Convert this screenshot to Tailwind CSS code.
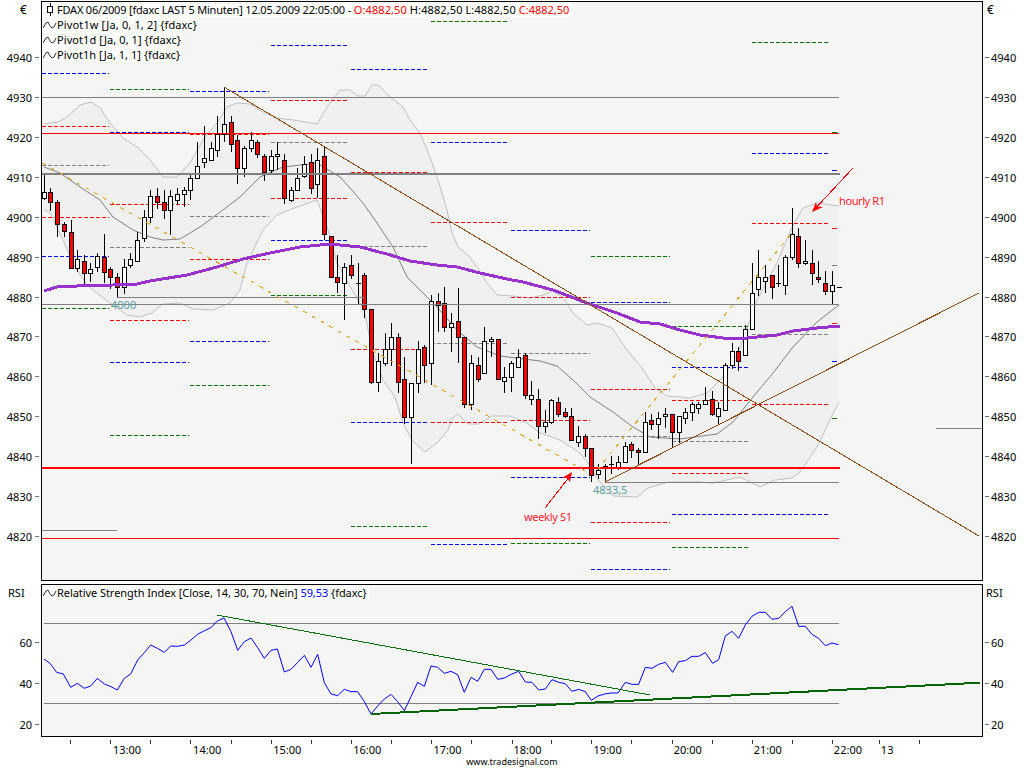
<!DOCTYPE html>
<html>
<head>
<meta charset="utf-8">
<script src="https://cdn.jsdelivr.net/npm/@tailwindcss/browser@4"></script>
</head>
<body class="bg-white">
<div class="w-[1024px] h-[768px] bg-white flex flex-col text-[11px] leading-[15px] text-black overflow-hidden [font-family:'Noto_Sans',sans-serif]">

  <!-- price row -->
  <div class="mt-px h-[580px] shrink-0 flex">
    <div class="w-[41px] flex flex-col">
      <div class="h-[36.75px] shrink-0 pl-[20px] pt-[1px] text-[12px]">€</div>
      <div class="h-[39.9px] shrink-0 flex items-center justify-end pr-[2px] gap-[3px]"><span>4940</span><i class="block w-[4px] h-px bg-gray-500"></i></div>
      <div class="h-[39.9px] shrink-0 flex items-center justify-end pr-[2px] gap-[3px]"><span>4930</span><i class="block w-[4px] h-px bg-gray-500"></i></div>
      <div class="h-[39.9px] shrink-0 flex items-center justify-end pr-[2px] gap-[3px]"><span>4920</span><i class="block w-[4px] h-px bg-gray-500"></i></div>
      <div class="h-[39.9px] shrink-0 flex items-center justify-end pr-[2px] gap-[3px]"><span>4910</span><i class="block w-[4px] h-px bg-gray-500"></i></div>
      <div class="h-[39.9px] shrink-0 flex items-center justify-end pr-[2px] gap-[3px]"><span>4900</span><i class="block w-[4px] h-px bg-gray-500"></i></div>
      <div class="h-[39.9px] shrink-0 flex items-center justify-end pr-[2px] gap-[3px]"><span>4890</span><i class="block w-[4px] h-px bg-gray-500"></i></div>
      <div class="h-[39.9px] shrink-0 flex items-center justify-end pr-[2px] gap-[3px]"><span>4880</span><i class="block w-[4px] h-px bg-gray-500"></i></div>
      <div class="h-[39.9px] shrink-0 flex items-center justify-end pr-[2px] gap-[3px]"><span>4870</span><i class="block w-[4px] h-px bg-gray-500"></i></div>
      <div class="h-[39.9px] shrink-0 flex items-center justify-end pr-[2px] gap-[3px]"><span>4860</span><i class="block w-[4px] h-px bg-gray-500"></i></div>
      <div class="h-[39.9px] shrink-0 flex items-center justify-end pr-[2px] gap-[3px]"><span>4850</span><i class="block w-[4px] h-px bg-gray-500"></i></div>
      <div class="h-[39.9px] shrink-0 flex items-center justify-end pr-[2px] gap-[3px]"><span>4840</span><i class="block w-[4px] h-px bg-gray-500"></i></div>
      <div class="h-[39.9px] shrink-0 flex items-center justify-end pr-[2px] gap-[3px]"><span>4830</span><i class="block w-[4px] h-px bg-gray-500"></i></div>
      <div class="h-[39.9px] shrink-0 flex items-center justify-end pr-[2px] gap-[3px]"><span>4820</span><i class="block w-[4px] h-px bg-gray-500"></i></div>
    </div>

    <div class="relative w-[942px] h-[580px] border border-black bg-[#f5f5f5]">
      <svg class="block" width="940" height="578" viewBox="42 2 940 578" fill="none">
        <!-- bollinger band fill + outlines -->
        <path fill="#f0f0f0" stroke="none" d="M44 209L50 213L63 240L75 267L87 285L93 290L110 303L127 315L140 317L152 313L163 304L180 303L193 309L213 310L230 303L240 290L247 263L263 230L277 215L297 207L317 200L328 230L337 263L348 283L364 310L373 353L383 380L395 397L403 423L412 440L425 452L438 442L448 430L452 418L458 414L468 424L478 424L492 416L510 416L527 423L540 433L560 440L580 453L588 463L598 480L613 496L637 497L648 488L668 482L697 482L713 483L740 477L760 487L775 480L792 478L800 472L817 447L830 420L839 402L839 206L817 203L803 208L792 227L777 263L757 300L738 353L723 377L707 393L690 398L680 397L667 396L655 388L642 368L627 350L612 328L598 323L587 325L573 313L563 297L553 291L543 295L530 298L513 296L497 295L487 283L477 267L468 255L458 247L452 233L447 210L438 180L430 157L420 133L410 120L403 107L390 97L378 85L372 85L365 96L358 96L350 90L340 90L327 107L317 124L293 120L277 118L263 112L250 104L237 103L227 107L217 123L203 140L190 163L177 177L163 177L150 160L137 147L123 138L110 123L100 108L91 102L80 105L67 117L58 122L44 124Z"/>
        <path stroke="#c0c0c0" d="M44 124L58 122L67 117L80 105L91 102L100 108L110 123L123 138L137 147L150 160L163 177L177 177L190 163L203 140L217 123L227 107L237 103L250 104L263 112L277 118L293 120L317 124L327 107L340 90L350 90L358 96L365 96L372 85L378 85L390 97L403 107L410 120L420 133L430 157L438 180L447 210L452 233L458 247L468 255L477 267L487 283L497 295L513 296L530 298L543 295L553 291L563 297L573 313L587 325L598 323L612 328L627 350L642 368L655 388L667 396L680 397L690 398L707 393L723 377L738 353L757 300L777 263L792 227L803 208L817 203L839 206"/>
        <path stroke="#c0c0c0" d="M44 209L50 213L63 240L75 267L87 285L93 290L110 303L127 315L140 317L152 313L163 304L180 303L193 309L213 310L230 303L240 290L247 263L263 230L277 215L297 207L317 200L328 230L337 263L348 283L364 310L373 353L383 380L395 397L403 423L412 440L425 452L438 442L448 430L452 418L458 414L468 424L478 424L492 416L510 416L527 423L540 433L560 440L580 453L588 463L598 480L613 496L637 497L648 488L668 482L697 482L713 483L740 477L760 487L775 480L792 478L800 472L817 447L830 420L839 402"/>
        <path stroke="#808080" d="M44 167L60 173L80 187L100 200L113 217L133 230L150 237L163 240L180 239L200 227L223 210L240 197L260 177L283 167L317 163L340 177L350 188L363 203L377 223L393 247L407 277L420 290L437 307L457 330L477 347L500 356L540 361L557 366L573 380L590 397L613 412L633 427L650 437L680 439L717 434L733 422L753 397L773 373L793 347L817 322L839 305"/>

        <!-- pivot segments -->
        <g shape-rendering="crispEdges" stroke-dasharray="4 2">
          <path stroke="#0000ff" d="M42 73.5h67M42 256.5h67M110 132.5h79M110 362.5h79M190 91.5h79M190 341.5h79M271 45.5h78M271 240.5h78M351 69.5h78M351 422.5h78M431 142.5h78M431 544.5h78M511 230.5h79M511 477.5h79M591 302.5h79M591 569.5h79M672 367.5h78M672 514.5h78M752 153.5h78M752 514.5h78"/>
          <path stroke="#ff0000" d="M42 126.5h67M42 217.5h67M110 204.5h79M110 320.5h79M190 134.5h79M190 259.5h79M271 100.5h78M271 198.5h78M351 172.5h78M351 349.5h78M431 222.5h78M431 422.5h78M511 297.5h79M511 420.5h79M591 389.5h79M591 522.5h79M672 400.5h78M672 473.5h78M752 223.5h78M752 404.5h78"/>
          <path stroke="#007000" d="M42 34.5h67M42 308.5h67M110 89.5h79M110 435.5h79M190 3.5h79M190 385.5h79M271 295.5h78M351 526.5h78M431 21.5h78M511 173.5h79M511 543.5h79M591 256.5h79M672 326.5h78M672 547.5h78M752 42.5h78"/>
          <path stroke="#808080" d="M42 165.5h67M110 247.5h79M190 216.5h79M271 142.5h78M351 246.5h78M431 343.5h78M511 353.5h79M591 436.5h79M672 441.5h78M752 334.5h78"/>
        </g>
        <g shape-rendering="crispEdges">
          <path stroke="#0000ff" d="M832 170.5h5M832 361.5h5"/>
          <path stroke="#ff0000" d="M832 228.5h5M832 323.5h5"/>
          <path stroke="#007000" d="M832 132.5h5M832 418.5h5"/>
          <path stroke="#808080" d="M832 265.5h5"/>
        </g>

        <!-- candles -->
        <g shape-rendering="crispEdges" stroke="#000">
          <path d="M44.5 175V200M50.5 188V211M57.5 200V237M64.5 222V237M71.5 220V269M77.5 250V272M84.5 255V285M90.5 263V282M97.5 253V272M104.5 234V283M110.5 267V289M117.5 273V297M124.5 259V294M130.5 253V268M137.5 232V261M144.5 210V242M150.5 190V223M157.5 188V209M164.5 190V219M170.5 190V235M177.5 188V205M184.5 187V207M190.5 173V200M197.5 142V178M204.5 126V168M211.5 142V160M217.5 116V157M224.5 87V142M231.5 116V152M237.5 135V184M244.5 146V177M251.5 132V152M257.5 140V158M264.5 154V181M271.5 150V173M277.5 142V170M284.5 154V204M291.5 187V202M297.5 168V190M304.5 156V178M311.5 154V194M317.5 148V198M324.5 147V240M331.5 236V277M337.5 255V293M344.5 263V320M351.5 255V279M358.5 263V305M364.5 273V318M371.5 309V384M378.5 353V392M385.5 333V366M391.5 323V366M398.5 333V393M404.5 357V424M411.5 383V464M418.5 341V393M424.5 345V383M431.5 295V385M438.5 293V332M444.5 287V332M451.5 313V352M458.5 288V363M464.5 337V408M471.5 355V410M478.5 357V382M484.5 327V373M491.5 337V357M498.5 339V379M504.5 367V393M511.5 361V392M518.5 349V367M525.5 353V399M531.5 381V405M538.5 389V439M545.5 410V433M551.5 399V424M558.5 397V417M565.5 408V418M571.5 408V441M578.5 426V447M585.5 434V457M591.5 448V482M598.5 464V479M605.5 464V482M611.5 456V474M618.5 456V470M625.5 442V462M631.5 442V458M638.5 448V466M645.5 412V452M651.5 414V430M658.5 412V439M665.5 408V428M672.5 414V447M679.5 417V443M685.5 408V424M692.5 402V421M698.5 402V414M705.5 387V404M712.5 391V416M718.5 402V424M725.5 363V410M732.5 343V369M738.5 347V371M745.5 325V355M752.5 263V329M758.5 250V296M765.5 265V293M772.5 275V299M778.5 265V287M785.5 255V295M792.5 208V260M798.5 228V268M805.5 240V265M812.5 250V285M818.5 261V283M825.5 271V295M832.5 271V304M837 287.5h5M603 466.5h5M609 464.5h5M776 283.5h5M356 283.5h5"/>
          <path fill="#ffffff" d="M42.5 192.5h4v6h-4zM75.5 259.5h4v9h-4zM88.5 269.5h4v4h-4zM95.5 256.5h4v11h-4zM122.5 267.5h4v20h-4zM128.5 259.5h4v6h-4zM135.5 240.5h4v21h-4zM142.5 217.5h4v21h-4zM148.5 196.5h4v21h-4zM168.5 196.5h4v14h-4zM175.5 194.5h4v6h-4zM182.5 190.5h4v4h-4zM188.5 178.5h4v12h-4zM195.5 166.5h4v12h-4zM202.5 158.5h4v4h-4zM209.5 148.5h4v12h-4zM215.5 134.5h4v16h-4zM222.5 124.5h4v10h-4zM242.5 148.5h4v20h-4zM249.5 140.5h4v8h-4zM269.5 156.5h4v14h-4zM275.5 154.5h4v2h-4zM289.5 190.5h4v10h-4zM295.5 178.5h4v12h-4zM302.5 164.5h4v12h-4zM315.5 160.5h4v24h-4zM342.5 267.5h4v16h-4zM376.5 361.5h4v21h-4zM383.5 349.5h4v14h-4zM389.5 337.5h4v12h-4zM409.5 383.5h4v34h-4zM416.5 349.5h4v34h-4zM429.5 301.5h4v62h-4zM449.5 323.5h4v4h-4zM469.5 363.5h4v41h-4zM482.5 341.5h4v32h-4zM489.5 339.5h4v2h-4zM502.5 377.5h4v4h-4zM509.5 363.5h4v14h-4zM516.5 357.5h4v10h-4zM529.5 395.5h4v4h-4zM543.5 422.5h4v4h-4zM549.5 400.5h4v22h-4zM576.5 436.5h4v6h-4zM596.5 470.5h4v4h-4zM616.5 462.5h4v5h-4zM623.5 446.5h4v16h-4zM643.5 422.5h4v30h-4zM656.5 418.5h4v6h-4zM663.5 414.5h4v2h-4zM677.5 416.5h4v16h-4zM683.5 412.5h4v6h-4zM690.5 404.5h4v8h-4zM696.5 404.5h4v4h-4zM703.5 400.5h4v4h-4zM716.5 408.5h4v8h-4zM723.5 365.5h4v45h-4zM730.5 351.5h4v14h-4zM743.5 329.5h4v26h-4zM750.5 293.5h4v36h-4zM756.5 277.5h4v12h-4zM763.5 277.5h4v4h-4zM783.5 257.5h4v28h-4zM790.5 234.5h4v23h-4zM803.5 261.5h4v2h-4zM830.5 285.5h4v6h-4z"/>
          <path fill="#ff0000" d="M48.5 192.5h4v10h-4zM55.5 202.5h4v22h-4zM62.5 224.5h4v7h-4zM69.5 232.5h4v36h-4zM82.5 261.5h4v12h-4zM102.5 257.5h4v15h-4zM108.5 269.5h4v8h-4zM115.5 277.5h4v10h-4zM155.5 196.5h4v6h-4zM162.5 202.5h4v8h-4zM229.5 122.5h4v22h-4zM235.5 140.5h4v28h-4zM255.5 142.5h4v12h-4zM262.5 156.5h4v16h-4zM282.5 160.5h4v38h-4zM309.5 162.5h4v26h-4zM322.5 156.5h4v78h-4zM329.5 236.5h4v41h-4zM335.5 277.5h4v5h-4zM349.5 265.5h4v10h-4zM362.5 275.5h4v34h-4zM369.5 309.5h4v73h-4zM396.5 337.5h4v45h-4zM402.5 379.5h4v38h-4zM422.5 347.5h4v18h-4zM436.5 301.5h4v4h-4zM442.5 303.5h4v24h-4zM456.5 321.5h4v16h-4zM462.5 337.5h4v67h-4zM476.5 365.5h4v14h-4zM496.5 339.5h4v40h-4zM523.5 355.5h4v40h-4zM536.5 399.5h4v27h-4zM556.5 402.5h4v12h-4zM563.5 412.5h4v4h-4zM569.5 416.5h4v24h-4zM583.5 436.5h4v12h-4zM589.5 448.5h4v27h-4zM629.5 444.5h4v6h-4zM636.5 450.5h4v2h-4zM649.5 420.5h4v4h-4zM670.5 414.5h4v18h-4zM710.5 399.5h4v15h-4zM736.5 351.5h4v10h-4zM770.5 275.5h4v12h-4zM796.5 236.5h4v27h-4zM810.5 263.5h4v10h-4zM816.5 277.5h4v2h-4zM823.5 283.5h4v8h-4z"/>
        </g>

        <!-- solid levels -->
        <g shape-rendering="crispEdges">
          <path stroke="#808080" d="M42 97.5H839M42 304.5H839M117 297.5H364M605 482.5H839M42 530.5H117M936 428.5H982"/>
          <path stroke="#808080" stroke-width="2" d="M42 174H840"/>
          <path stroke="#ff0000" d="M42 133.5H839M42 538.5H839"/>
          <path stroke="#ff0000" stroke-width="2" d="M42 468H840"/>
        </g>

        <!-- purple average -->
        <path stroke="#9932cc" stroke-width="3" shape-rendering="crispEdges" d="M44 291L57 287L77 286L113 285L137 284L150 281L187 275L217 267L243 259L270 253L300 247L330 244L360 247L387 254L410 261L437 265L457 267L480 273L507 279L523 282L553 290L587 303L617 313L640 322L660 324L680 330L700 335L723 338L747 338L777 335L793 331L817 328L840 326"/>

        <!-- trend lines -->
        <g shape-rendering="crispEdges">
          <path stroke="#8b4a14" d="M224 87L979 536M605 482L979 293"/>
          <path stroke="#e0a020" stroke-dasharray="4 6" d="M42 163L587 472M597 470L792 233"/>
          <path stroke="#ff0000" d="M853 168L814 210M545 508L570 476"/>
        </g>
        <path fill="#ff0000" d="M812 212L823 207L817 206.5L816 202ZM572 472L562 478L567 478L570 482Z"/>

        <!-- chart notes -->
        <g font-size="11">
          <text x="839" y="205" fill="#ff1a30" textLength="46">hourly R1</text>
          <text x="524" y="521" fill="#ff1a30" textLength="48">weekly S1</text>
          <text x="111" y="309" fill="#5f9ea0">4000</text>
          <text x="593" y="494" fill="#5f9ea0">4833,5</text>
        </g>
      </svg>

      <!-- legend -->
      <div class="absolute left-0 top-0 flex flex-col items-start">
        <div class="h-[15px] w-[530px] bg-white/90 flex items-center pl-[1px] whitespace-nowrap">
          <svg class="w-[14px] h-[13px] shrink-0" viewBox="0 0 14 13" fill="none" stroke="#111"><path d="M7.5 0V13"/><rect x="4.5" y="3.5" width="5" height="6" fill="#fff"/></svg>
          <span class="tracking-[-0.2px]">FDAX 06/2009 [fdaxc LAST 5 Minuten]&nbsp;</span><span class="tracking-[-0.16px]">12.05.2009 22:05:00 -&nbsp;</span><span class="text-[#ff0000] tracking-[0.1px]">O:4882,50</span><span class="tracking-[0.1px]">&nbsp;H:4882,50 L:4882,50&nbsp;</span><span class="text-[#ff0000]">C:4882,50</span>
        </div>
        <div class="h-[15px] bg-white/90 flex items-center pl-[1px] pr-[2px] whitespace-nowrap tracking-[0.14px]">
          <svg class="w-[14px] h-[8px] shrink-0" viewBox="0 0 14 8" fill="none" stroke="#333"><path d="M0 7L3 2L5 1L7 5L9 7L11 6L13 2"/></svg>
          <span>Pivot1w [Ja, 0, 1, 2] {fdaxc}</span>
        </div>
        <div class="h-[15px] bg-white/90 flex items-center pl-[1px] pr-[2px] whitespace-nowrap tracking-[0.08px]">
          <svg class="w-[14px] h-[8px] shrink-0" viewBox="0 0 14 8" fill="none" stroke="#333"><path d="M0 7L3 2L5 1L7 5L9 7L11 6L13 2"/></svg>
          <span>Pivot1d [Ja, 0, 1] {fdaxc}</span>
        </div>
        <div class="h-[15px] bg-white/90 flex items-center pl-[1px] pr-[2px] whitespace-nowrap tracking-[0.04px]">
          <svg class="w-[14px] h-[8px] shrink-0" viewBox="0 0 14 8" fill="none" stroke="#333"><path d="M0 7L3 2L5 1L7 5L9 7L11 6L13 2"/></svg>
          <span>Pivot1h [Ja, 1, 1] {fdaxc}</span>
        </div>
      </div>
    </div>

    <div class="w-[41px] flex flex-col">
      <div class="h-[36.75px] shrink-0 pl-[4px] pt-[1px] text-[12px]">€</div>
      <div class="h-[39.9px] shrink-0 flex items-center pl-[2px] gap-[2px]"><i class="block w-[4px] h-px bg-gray-500"></i><span>4940</span></div>
      <div class="h-[39.9px] shrink-0 flex items-center pl-[2px] gap-[2px]"><i class="block w-[4px] h-px bg-gray-500"></i><span>4930</span></div>
      <div class="h-[39.9px] shrink-0 flex items-center pl-[2px] gap-[2px]"><i class="block w-[4px] h-px bg-gray-500"></i><span>4920</span></div>
      <div class="h-[39.9px] shrink-0 flex items-center pl-[2px] gap-[2px]"><i class="block w-[4px] h-px bg-gray-500"></i><span>4910</span></div>
      <div class="h-[39.9px] shrink-0 flex items-center pl-[2px] gap-[2px]"><i class="block w-[4px] h-px bg-gray-500"></i><span>4900</span></div>
      <div class="h-[39.9px] shrink-0 flex items-center pl-[2px] gap-[2px]"><i class="block w-[4px] h-px bg-gray-500"></i><span>4890</span></div>
      <div class="h-[39.9px] shrink-0 flex items-center pl-[2px] gap-[2px]"><i class="block w-[4px] h-px bg-gray-500"></i><span>4880</span></div>
      <div class="h-[39.9px] shrink-0 flex items-center pl-[2px] gap-[2px]"><i class="block w-[4px] h-px bg-gray-500"></i><span>4870</span></div>
      <div class="h-[39.9px] shrink-0 flex items-center pl-[2px] gap-[2px]"><i class="block w-[4px] h-px bg-gray-500"></i><span>4860</span></div>
      <div class="h-[39.9px] shrink-0 flex items-center pl-[2px] gap-[2px]"><i class="block w-[4px] h-px bg-gray-500"></i><span>4850</span></div>
      <div class="h-[39.9px] shrink-0 flex items-center pl-[2px] gap-[2px]"><i class="block w-[4px] h-px bg-gray-500"></i><span>4840</span></div>
      <div class="h-[39.9px] shrink-0 flex items-center pl-[2px] gap-[2px]"><i class="block w-[4px] h-px bg-gray-500"></i><span>4830</span></div>
      <div class="h-[39.9px] shrink-0 flex items-center pl-[2px] gap-[2px]"><i class="block w-[4px] h-px bg-gray-500"></i><span>4820</span></div>
    </div>
  </div>

  <!-- RSI row -->
  <div class="mt-[3px] h-[153px] shrink-0 flex">
    <div class="w-[41px] flex flex-col">
      <div class="h-[38.2px] shrink-0 pl-[8px] pt-[1px]">RSI</div>
      <div class="h-[41px] shrink-0 flex items-center justify-end pr-[2px] gap-[3px]"><span>60</span><i class="block w-[4px] h-px bg-gray-500"></i></div>
      <div class="h-[41px] shrink-0 flex items-center justify-end pr-[2px] gap-[3px]"><span>40</span><i class="block w-[4px] h-px bg-gray-500"></i></div>
      <div class="h-[41px] shrink-0 flex items-center justify-end pr-[2px] gap-[3px]"><span>20</span><i class="block w-[4px] h-px bg-gray-500"></i></div>
    </div>
    <div class="relative w-[942px] h-[153px] border border-black bg-[#f5f5f5]">
      <svg class="block" width="940" height="151" viewBox="42 585 940 151" fill="none">
        <g shape-rendering="crispEdges">
          <path stroke="#808080" d="M44 623.5H839M44 703.5H839"/>
        </g>
        <g transform="translate(0 575) scale(0.33333)">
          <polyline vector-effect="non-scaling-stroke" stroke="#0000ff" points="132,252 150,265 170,292 190,297 212,337 232,325 253,340 272,333 292,310 313,327 333,335 352,345 373,310 392,297 413,255 433,233 452,210 472,220 493,232 512,213 533,214 553,210 573,195 594,177 614,167 634,157 652,138 672,129 693,170 713,226 733,200 753,189 773,218 793,250 813,226 832,222 853,291 873,283 893,262 913,241 933,277 953,238 973,323 993,357 1013,362 1033,343 1053,350 1073,350 1093,380 1113,417 1133,393 1153,372 1173,358 1193,380 1213,407 1233,365 1253,322 1273,334 1293,273 1313,277 1333,295 1353,289 1373,299 1393,352 1413,307 1433,319 1453,283 1473,283 1493,313 1513,309 1536,297 1556,289 1576,321 1596,322 1616,345 1636,342 1656,314 1676,322 1696,326 1716,349 1736,343 1756,350 1774,376 1794,363 1814,357 1834,354 1854,354 1876,322 1896,328 1916,328 1936,277 1956,280 1976,268 1996,262 2018,292 2036,260 2056,257 2076,244 2096,244 2116,233 2138,265 2156,254 2176,183 2196,169 2216,190 2236,150 2256,124 2276,112 2296,112 2316,133 2336,130 2356,110 2376,94 2396,154 2416,154 2436,178 2456,190 2476,212 2496,204 2516,209"/>
        </g>
        <path stroke="#007000" shape-rendering="crispEdges" d="M217 615L650 695"/>
        <path stroke="#006400" stroke-width="2" shape-rendering="crispEdges" d="M371 714L980 682.7"/>
      </svg>
      <div class="absolute left-0 top-0 h-[15px] bg-white/90 flex items-center pl-[1px] pr-[2px] whitespace-nowrap tracking-[-0.06px]">
        <svg class="w-[14px] h-[8px] shrink-0" viewBox="0 0 14 8" fill="none" stroke="#333"><path d="M0 7L3 2L5 1L7 5L9 7L11 6L13 2"/></svg>
        <span>Relative Strength Index [Close, 14, 30, 70, Nein]&nbsp;</span><span class="text-[#0000ff]">59,53</span><span>&nbsp;{fdaxc}</span>
      </div>
    </div>
    <div class="w-[41px] flex flex-col">
      <div class="h-[38.2px] shrink-0 pl-[3px] pt-[1px]">RSI</div>
      <div class="h-[41px] shrink-0 flex items-center pl-[2px] gap-[2px]"><i class="block w-[4px] h-px bg-gray-500"></i><span>60</span></div>
      <div class="h-[41px] shrink-0 flex items-center pl-[2px] gap-[2px]"><i class="block w-[4px] h-px bg-gray-500"></i><span>40</span></div>
      <div class="h-[41px] shrink-0 flex items-center pl-[2px] gap-[2px]"><i class="block w-[4px] h-px bg-gray-500"></i><span>20</span></div>
    </div>
  </div>

  <!-- time axis -->
  <svg class="block shrink-0" width="1024" height="8" viewBox="0 737 1024 8" fill="none">
    <path stroke="#333" shape-rendering="crispEdges" d="M70.5 740v4M110.5 740v4M150.5 740v4M190.5 740v4M231.5 740v4M271.5 740v4M311.5 740v4M351.5 740v4M391.5 740v4M431.5 740v4M471.5 740v4M512.5 740v4M551.5 740v4M591.5 740v4M631.5 740v4M672.5 740v4M712.5 740v4M752.5 740v4M792.5 740v4M832.5 740v4M879.5 740v4M919.5 740v4"/>
  </svg>
  <div class="flex pl-[113px] h-[9px] leading-[9px] whitespace-nowrap shrink-0">
    <span class="w-[80.1px]">13:00</span><span class="w-[80.1px]">14:00</span><span class="w-[80.1px]">15:00</span><span class="w-[80.1px]">16:00</span><span class="w-[80.1px]">17:00</span><span class="w-[80.1px]">18:00</span><span class="w-[80.1px]">19:00</span><span class="w-[80.1px]">20:00</span><span class="w-[80.1px]">21:00</span><span class="w-[47px]">22:00</span><span>13</span>
  </div>
  <div class="flex justify-center text-[9px] leading-[10px] mt-[3px] shrink-0">www.tradesignal.com</div>
</div>
</body>
</html>
